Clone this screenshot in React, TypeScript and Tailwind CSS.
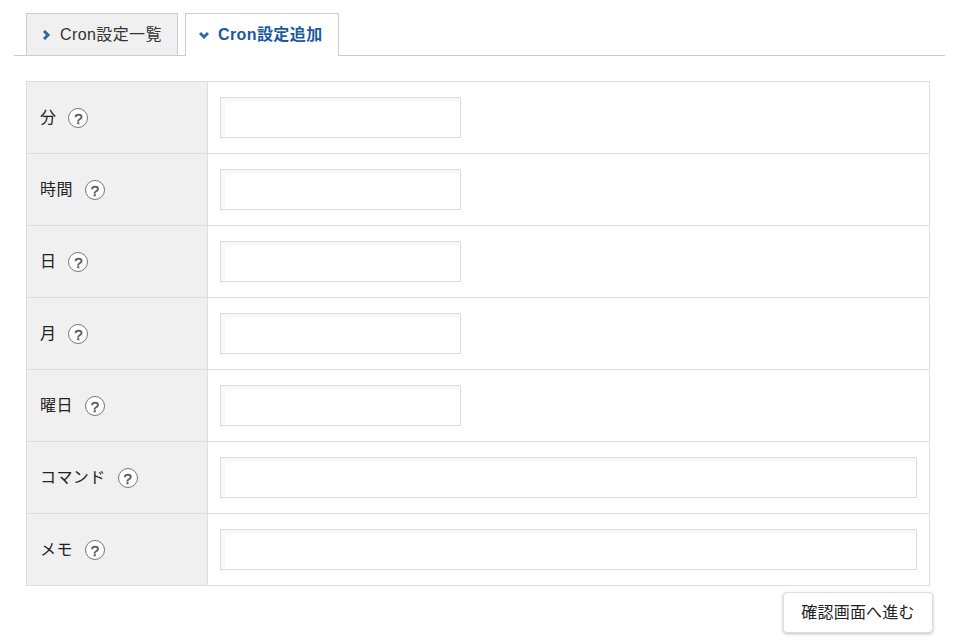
const rows = [
  { label: '分', wide: false },
  { label: '時間', wide: false },
  { label: '日', wide: false },
  { label: '月', wide: false },
  { label: '曜日', wide: false },
  { label: 'コマンド', wide: true },
  { label: 'メモ', wide: true },
]

const font = "font-['Liberation_Sans','Noto_Sans_CJK_JP',sans-serif]"

function Help() {
  return (
    <span className="ml-[12px] mt-[1px] flex h-[20px] w-[20px] items-center justify-center rounded-full border border-[#777] bg-white text-[15px] leading-none tracking-normal text-[#555] [-webkit-text-stroke:0.5px_#555]">
      ?
    </span>
  )
}

function Chevron({ down }: { down?: boolean }) {
  return (
    <svg width="10" height="10" viewBox="0 0 10 10" className="mr-[9px] shrink-0" fill="none" stroke="#2f6aa8" strokeWidth="3">
      <path d={down ? 'M1 3 L5 7 L9 3' : 'M3 1 L7 5 L3 9'} />
    </svg>
  )
}

export default function App() {
  return (
    <div className={`${font} h-[641px] w-[963px] overflow-hidden bg-white text-[16px] tracking-[0.4px] text-[#222]`}>
      <div className="ml-[14px] mr-[18px] mt-[13px] flex h-[43px] gap-[7px] border-b border-[#ccc] pl-[12px]">
        <div className="flex h-[43px] w-[152px] items-center border border-[#ccc] bg-[#f0f0f0] pl-[14px] text-[#333]">
          <Chevron />
          Cron設定一覧
        </div>
        <div className="flex h-[43px] w-[154px] items-center border border-b-0 border-[#ccc] bg-white pl-[13px] font-bold text-[#1a5a9e]">
          <Chevron down />
          Cron設定追加
        </div>
      </div>

      <div className="ml-[26px] mt-[25px] w-[904px] border border-b-0 border-[#ddd]">
        {rows.map((row) => (
          <div key={row.label} className="flex h-[72px] border-b border-[#ddd]">
            <div className="flex w-[181px] items-center border-r border-[#ddd] bg-[#f0f0f0] pl-[13px]">
              <span>{row.label}</span>
              <Help />
            </div>
            <div className="flex flex-1 items-center pl-[12px]">
              <div
                className={`h-[41px] border border-[#ddd] bg-white shadow-[inset_4px_4px_0_#f8f8f8] ${
                  row.wide ? 'w-[697px]' : 'w-[241px]'
                }`}
              />
            </div>
          </div>
        ))}
      </div>

      <div className="mr-[30px] mt-[6px] flex justify-end">
        <button className="h-[41px] w-[150px] rounded-[4px] border border-[#ddd] bg-white text-[16px] tracking-[0.2px] text-[#222] shadow-[0_1px_3px_rgba(0,0,0,0.25)]">
          確認画面へ進む
        </button>
      </div>
    </div>
  )
}
